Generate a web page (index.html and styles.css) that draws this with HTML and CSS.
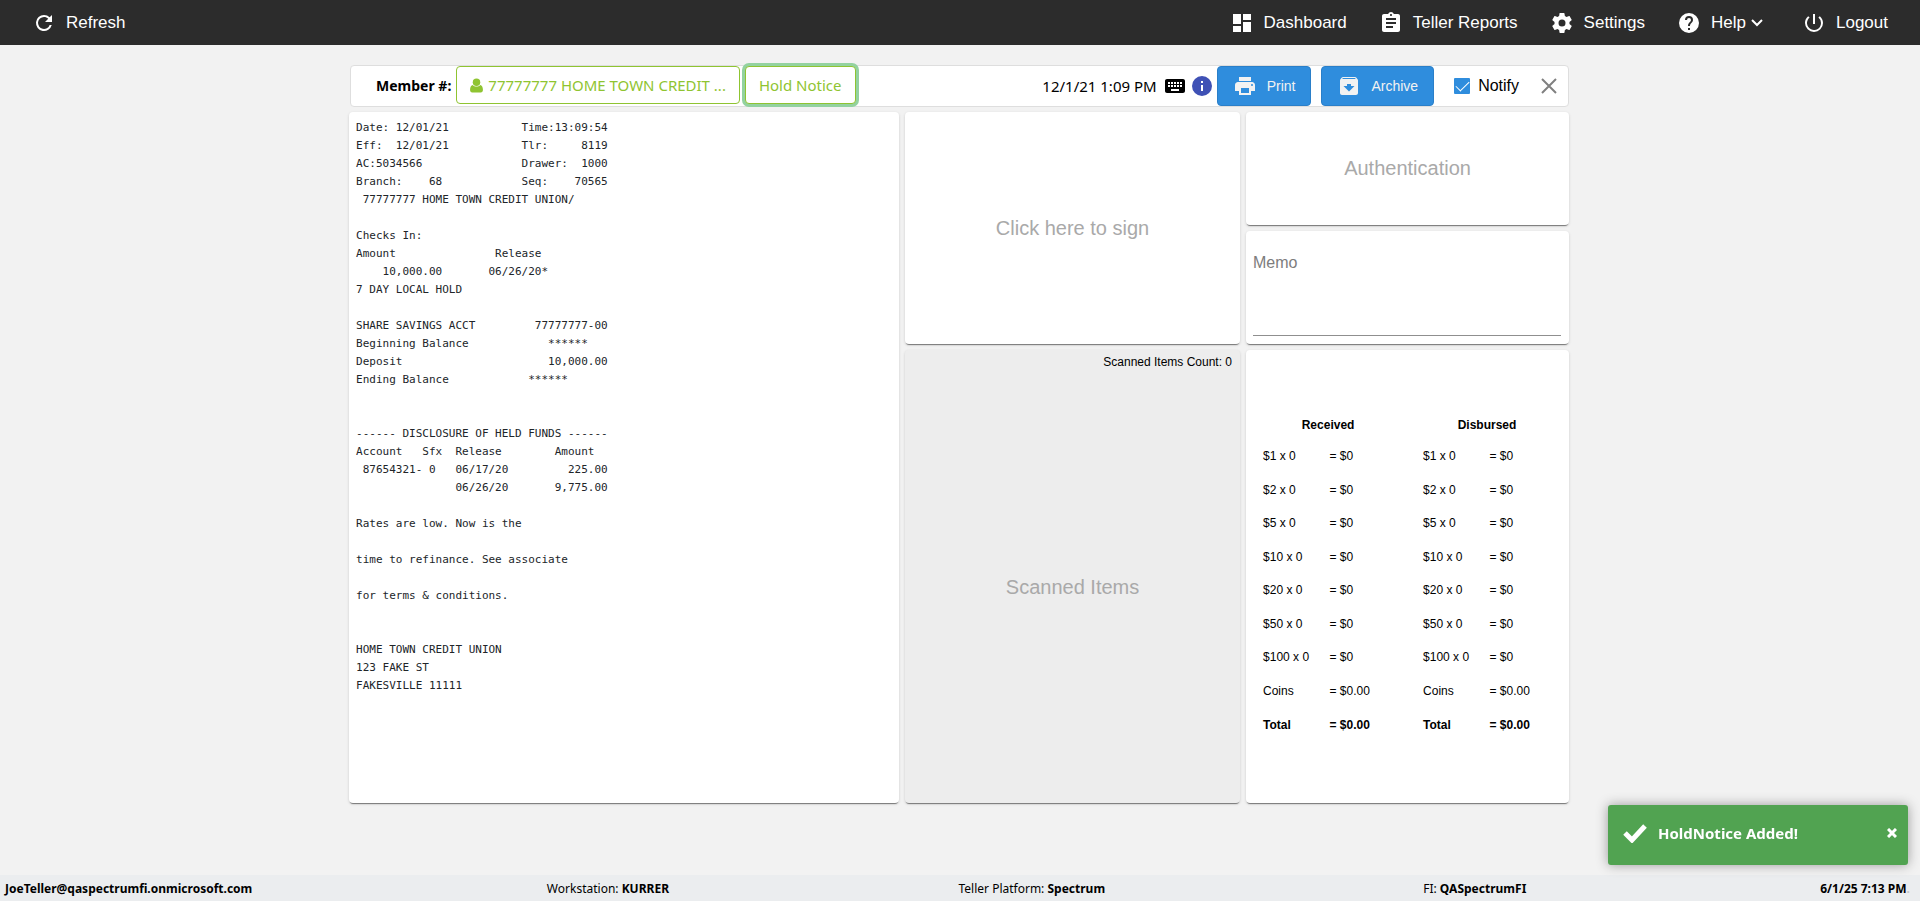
FILE: index.html
```html
<!DOCTYPE html>
<html lang="en">
<head>
<meta charset="utf-8">
<title>Hold Notice</title>
<link rel="stylesheet" href="styles.css">
</head>
<body>
<nav class="topbar">
  <a class="nav-link" href="#"><svg class="icon" viewBox="0 0 24 24"><path d="M17.65 6.35A7.96 7.96 0 0 0 12 4a8 8 0 1 0 7.73 10h-2.08A6 6 0 1 1 12 6c1.66 0 3.14.69 4.22 1.78L13 11h7V4z"/></svg>Refresh</a>
  <div class="nav-right">
    <a class="nav-link" href="#"><svg class="icon" viewBox="0 0 24 24"><path d="M3 13h8V3H3zm0 8h8v-6H3zm10 0h8V11h-8zm0-18v6h8V3z"/></svg>Dashboard</a>
    <a class="nav-link" href="#"><svg class="icon" viewBox="0 0 24 24"><path d="M19 3h-4.18C14.4 1.84 13.3 1 12 1s-2.4.84-2.82 2H5c-1.1 0-2 .9-2 2v14c0 1.1.9 2 2 2h14c1.1 0 2-.9 2-2V5c0-1.100-.9-2-2-2zm-7 0c.55 0 1 .45 1 1s-.45 1-1 1-1-.45-1-1 .45-1 1-1zm2 14H7v-2h7zm3-4H7v-2h10zm0-4H7V7h10z"/></svg>Teller Reports</a>
    <a class="nav-link" href="#"><svg class="icon" viewBox="0 0 24 24"><path d="M19.43 12.98c.04-.32.07-.64.07-.98s-.03-.66-.07-.98l2.110-1.650c.190-.150.240-.420.120-.640l-2-3.460c-.120-.220-.390-.300-.610-.220l-2.490 1c-.520-.400-1.080-.730-1.690-.980l-.380-2.650A.488.488 0 0 0 14 2h-4c-.250 0-.460.180-.490.420l-.380 2.650c-.610.250-1.170.590-1.690.980l-2.490-1c-.230-.090-.490 0-.610.220l-2 3.460c-.130.220-.070.490.120.640l2.110 1.650c-.040.320-.070.650-.070.980s.030.660.070.980l-2.110 1.650c-.190.150-.240.420-.120.640l2 3.460c.120.220.390.300.610.220l2.490-1c.520.400 1.080.730 1.690.980l.380 2.650c.030.240.240.420.490.420h4c.250 0 .460-.180.490-.420l.380-2.650c.610-.250 1.170-.590 1.690-.980l2.490 1c.230.090.490 0 .610-.220l2-3.460c.120-.220.070-.490-.120-.640zM12 15.500a3.500 3.500 0 1 1 0-7 3.500 3.500 0 0 1 0 7z"/></svg>Settings</a>
    <a class="nav-link help-link" href="#"><svg class="icon" viewBox="0 0 24 24"><path d="M12 2a10 10 0 1 0 0 20 10 10 0 0 0 0-20zm1 17h-2v-2h2zm2.070-7.750-.900.920C13.450 12.900 13 13.500 13 15h-2v-.500c0-1.100.450-2.100 1.170-2.830l1.240-1.260c.370-.360.590-.860.590-1.410a2 2 0 1 0-4 0H8a4 4 0 1 1 8 0c0 .880-.360 1.680-.930 2.250z"/></svg><span class="help-label">Help<svg class="chevron" viewBox="0 0 14 14"><path d="M2 4l5 5 5-5"/></svg></span></a>
    <a class="nav-link" href="#"><svg class="icon" viewBox="0 0 24 24"><path d="M13 3h-2v10h2zm4.830 2.170-1.420 1.420A6.920 6.920 0 0 1 19 12a7 7 0 1 1-11.420-5.420L6.170 5.170A8.930 8.930 0 0 0 3 12a9 9 0 0 0 18 0c0-2.740-1.230-5.180-3.170-6.830z"/></svg>Logout</a>
  </div>
</nav>

<main class="content">
  <header class="toolbar">
    <strong class="member-label">Member #:</strong>
    <button class="outline-btn member-btn" type="button"><svg class="user-icon" viewBox="0 0 12 14"><circle cx="6" cy="4" r="3.500"/><path d="M2.500 6.500C1 6.800 0 8.300 0 11c0 1.700.8 2.500 2 2.500h8c1.200 0 2-.8 2-2.500 0-2.700-1-4.200-2.500-4.500C8.600 7.600 7.400 8 6 8s-2.600-.4-3.500-1.500z"/></svg><span>77777777 HOME TOWN CREDIT ...</span></button>
    <button class="outline-btn focused" type="button">Hold Notice</button>
    <div class="toolbar-right">
      <span class="timestamp">12/1/21 1:09 PM</span>
      <svg class="icon" viewBox="0 0 24 24"><path d="M20 5H4c-1.100 0-1.990.9-1.990 2L2 17c0 1.100.9 2 2 2h16c1.100 0 2-.9 2-2V7c0-1.100-.9-2-2-2zm-9 3h2v2h-2zm0 3h2v2h-2zM8 8h2v2H8zm0 3h2v2H8zm-1 2H5v-2h2zm0-3H5V8h2zm9 7H8v-2h8zm0-4h-2v-2h2zm0-3h-2V8h2zm3 3h-2v-2h2zm0-3h-2V8h2z"/></svg>
      <svg class="icon info" viewBox="0 0 24 24"><path d="M12 2a10 10 0 1 0 0 20 10 10 0 0 0 0-20zm1 15h-2v-6h2zm0-8h-2V7h2z"/></svg>
      <button class="solid-btn" type="button"><svg class="icon" viewBox="0 0 24 24"><path d="M19 8H5c-1.660 0-3 1.340-3 3v6h4v4h12v-4h4v-6c0-1.660-1.340-3-3-3zm-3 11H8v-5h8zm3-7a1 1 0 1 1 0-2 1 1 0 0 1 0 2zm-1-9H6v4h12z"/></svg>Print</button>
      <button class="solid-btn archive-btn" type="button"><svg class="icon" viewBox="0 0 24 24"><path d="M20.540 5.230l-1.390-1.680A1.450 1.450 0 0 0 18 3H6c-.470 0-.880.210-1.160.550L3.460 5.230C3.170 5.570 3 6.020 3 6.500V19c0 1.100.9 2 2 2h14c1.100 0 2-.9 2-2V6.500c0-.480-.170-.930-.460-1.270zM12 17.500L6.500 12H10v-2h4v2h3.500zM5.120 5l.810-1h12l.940 1z"/></svg>Archive</button>
      <label class="notify"><input class="check" type="checkbox" checked>Notify</label>
      <button class="close-btn" type="button" aria-label="Close"><svg class="icon close-icon" viewBox="0 0 24 24"><path d="M5 5l14 14M19 5L5 19"/></svg></button>
    </div>
  </header>

  <div class="panels">
    <section class="card receipt"><pre class="receipt-text">Date: 12/01/21           Time:13:09:54
Eff:  12/01/21           Tlr:     8119
AC:5034566               Drawer:  1000
Branch:    68            Seq:    70565
 77777777 HOME TOWN CREDIT UNION/

Checks In:
Amount               Release
    10,000.00       06/26/20*
7 DAY LOCAL HOLD

SHARE SAVINGS ACCT         77777777-00
Beginning Balance            ******
Deposit                      10,000.00
Ending Balance            ******


------ DISCLOSURE OF HELD FUNDS ------
Account   Sfx  Release        Amount
 87654321- 0   06/17/20         225.00
               06/26/20       9,775.00

Rates are low. Now is the

time to refinance. See associate

for terms &amp; conditions.


HOME TOWN CREDIT UNION
123 FAKE ST
FAKESVILLE 11111</pre></section>
    <button class="card sign" type="button">Click here to sign</button>
    <button class="card auth" type="button">Authentication</button>
    <section class="card memo"><textarea class="memo-input" placeholder="Memo" aria-label="Memo"></textarea></section>
    <section class="card scanned">
      <div class="scanned-count">Scanned Items Count: 0</div>
      <div class="scanned-title">Scanned Items</div>
    </section>
    <section class="card cash">
      <table class="cash-table">
        <colgroup><col class="col-unit"><col class="col-received"><col class="col-unit"><col></colgroup>
        <thead><tr><th colspan="2">Received</th><th colspan="2">Disbursed</th></tr></thead>
        <tbody>
          <tr><td>$1 x 0</td><td>= $0</td><td>$1 x 0</td><td>= $0</td></tr>
          <tr><td>$2 x 0</td><td>= $0</td><td>$2 x 0</td><td>= $0</td></tr>
          <tr><td>$5 x 0</td><td>= $0</td><td>$5 x 0</td><td>= $0</td></tr>
          <tr><td>$10 x 0</td><td>= $0</td><td>$10 x 0</td><td>= $0</td></tr>
          <tr><td>$20 x 0</td><td>= $0</td><td>$20 x 0</td><td>= $0</td></tr>
          <tr><td>$50 x 0</td><td>= $0</td><td>$50 x 0</td><td>= $0</td></tr>
          <tr><td>$100 x 0</td><td>= $0</td><td>$100 x 0</td><td>= $0</td></tr>
          <tr><td>Coins</td><td>= $0.00</td><td>Coins</td><td>= $0.00</td></tr>
          <tr class="total"><td>Total</td><td>= $0.00</td><td>Total</td><td>= $0.00</td></tr>
        </tbody>
      </table>
    </section>
  </div>
</main>

<footer class="statusbar">
  <strong>JoeTeller@qaspectrumfi.onmicrosoft.com</strong>
  <span>Workstation: <strong>KURRER</strong></span>
  <span>Teller Platform: <strong>Spectrum</strong></span>
  <span>FI: <strong>QASpectrumFI</strong></span>
  <strong class="clock">6/1/25 7:13 PM<span class="dot">.</span></strong>
</footer>

<div class="toast" role="status">
  <svg class="toast-check" viewBox="0 0 24 20"><path d="M2 10l7 7L22 3"/></svg>
  <span class="toast-text">HoldNotice Added!</span>
  <button class="toast-close" type="button" aria-label="Dismiss"><svg class="toast-x" viewBox="0 0 10 10"><path d="M1 1l8 8M9 1L1 9"/></svg></button>
</div>
</body>
</html>
```

FILE: styles.css
```css
* { box-sizing: border-box; }

body {
  margin: 0;
  min-height: 100vh;
  display: flex;
  flex-direction: column;
  background: #f2f2f2;
  color: #000;
  font-family: "Liberation Sans", Arial, sans-serif;
  font-size: 16px;
}

button {
  font-family: inherit;
  cursor: pointer;
}

.icon {
  width: 24px;
  height: 24px;
  flex: none;
  fill: currentColor;
}

/* Top navigation */
.topbar {
  height: 45px;
  display: flex;
  justify-content: space-between;
  align-items: center;
  padding: 0 32px;
  background: #2c2c2c;
}

.nav-right {
  display: flex;
  gap: 32px;
}

.nav-link {
  display: flex;
  align-items: center;
  gap: 10px;
  color: #fff;
  font-size: 17px;
  text-decoration: none;
}

.help-link { padding-right: 6px; }

.help-label {
  display: flex;
  align-items: center;
  gap: 4px;
}

.chevron {
  width: 14px;
  height: 14px;
  fill: none;
  stroke: currentColor;
  stroke-width: 2;
}

/* Main area */
.content {
  flex: 1;
  display: flex;
  flex-direction: column;
  gap: 5px;
  padding: 20px 18.28% 72px 18.18%;
}

.toolbar {
  display: flex;
  align-items: center;
  gap: 5px;
  height: 42px;
  margin-left: 1px;
  padding-left: 25px;
  background: #fff;
  border: 1px solid #dedede;
  border-radius: 4px;
}

.member-label {
  padding-bottom: 2px;
  font-family: "Noto Sans", sans-serif;
  font-size: 14px;
}

.outline-btn {
  height: 38px;
  align-self: flex-start;
  padding: 0 13px;
  background: #fff;
  border: 1px solid #8fc431;
  border-radius: 4px;
  color: #8fc431;
  font-family: "Noto Sans", sans-serif;
  font-size: 15px;
  white-space: nowrap;
}

.member-btn {
  display: flex;
  align-items: center;
  gap: 5px;
}

.user-icon {
  width: 13px;
  height: 15px;
  fill: currentColor;
}

.focused { box-shadow: 0 0 0 3px #93d2a0; }

.toolbar-right {
  display: flex;
  align-items: center;
  margin-left: auto;
  padding-right: 7px;
}

.timestamp {
  margin-right: 6px;
  font-family: "Noto Sans", sans-serif;
  font-size: 15px;
}

.info {
  margin: 0 3px;
  color: #3f51b5;
}

.solid-btn {
  display: flex;
  align-items: center;
  gap: 10px;
  height: 40px;
  padding: 0 15px;
  background: #2f8ddd;
  border: 1px solid #2a7fc9;
  border-radius: 4px;
  color: #f2f2f2;
  font-size: 14px;
}

.archive-btn { margin: 0 20px 0 10px; }

.notify {
  display: flex;
  align-items: center;
  gap: 8px;
}

.check {
  width: 16px;
  height: 16px;
  margin: 0;
  appearance: none;
  background: #2f8ddd;
  border-radius: 1px;
  display: grid;
  place-items: center;
}

.check::before {
  content: "";
  width: 12px;
  height: 6px;
  margin-bottom: 3px;
  border: solid #fff;
  border-width: 0 0 1px 1px;
  transform: rotate(-45deg);
}

.close-btn {
  display: flex;
  margin-left: 18px;
  padding: 0;
  background: none;
  border: 0;
  color: #808080;
}

.close-icon {
  fill: none;
  stroke: currentColor;
  stroke-width: 2;
}

/* Panels */
.panels {
  flex: 1;
  display: grid;
  grid-template-columns: 550fr 335fr 323fr;
  grid-template-rows: 1fr 1fr 4fr;
  gap: 6px;
}

.card {
  background: #fff;
  border: 0;
  border-radius: 4px;
  box-shadow: 0 2px 1px -1px rgba(0, 0, 0, 0.45), 0 1px 3px rgba(0, 0, 0, 0.16);
}

.receipt {
  grid-row: 1 / 4;
  padding: 7px;
}

.receipt-text {
  margin: 0;
  color: #212529;
  font-family: "DejaVu Sans Mono", monospace;
  font-size: 11px;
  line-height: 18px;
}

.sign,
.auth,
.scanned-title {
  color: #a9a9a9;
  font-size: 20px;
}

.sign { grid-row: 1 / 3; }

.memo {
  display: flex;
  padding: 8px 8px 8px 7px;
}

.memo-input {
  flex: 1;
  width: 100%;
  padding: 15px 0 0;
  background: none;
  border: 0;
  border-bottom: 1px solid #8f8f8f;
  resize: none;
  font: inherit;
}

.memo-input::placeholder { color: #7d7d7d; }

.scanned {
  grid-column: 2;
  grid-row: 3;
  display: flex;
  flex-direction: column;
  padding: 3px 8px 0;
  background: #ededed;
  font-size: 12px;
}

.scanned-count {
  line-height: 18px;
  text-align: right;
}

.scanned-title {
  flex: 1;
  display: grid;
  place-items: center;
}

.cash {
  grid-column: 3;
  padding: 61px 4px 0 17px;
}

.cash-table {
  width: 100%;
  height: 330px;
  table-layout: fixed;
  border-collapse: collapse;
  font-size: 12px;
}

.col-unit { width: 22%; }

.col-received { width: 31%; }

.cash-table th {
  height: 28px;
  padding: 0 30px 0 0;
}

.cash-table th:last-child { padding-right: 14px; }

.cash-table td {
  height: 33px;
  padding: 0;
}

.total { font-weight: bold; }

/* Status bar */
.statusbar {
  display: grid;
  grid-template-columns: 541fr 411fr 464fr 300fr 186fr;
  align-items: center;
  height: 26px;
  padding: 0 10px 0 5px;
  background: #ebedef;
  font-family: "Noto Sans", sans-serif;
  font-size: 12px;
}

.clock { text-align: right; }

.dot { color: #c4c6c8; }

/* Toast */
.toast {
  position: fixed;
  right: 12px;
  bottom: 36px;
  width: 300px;
  height: 60px;
  display: flex;
  align-items: center;
  padding: 0 11px 5px 15px;
  background: #51a351;
  border-radius: 3px;
  box-shadow: 0 0 12px #999;
  color: #fff;
}

.toast-check {
  width: 24px;
  height: 20px;
  margin-right: 11px;
  fill: none;
  stroke: currentColor;
  stroke-width: 5;
}

.toast-text {
  font-family: "Noto Sans", sans-serif;
  font-size: 15px;
  font-weight: bold;
}

.toast-close {
  display: flex;
  margin-left: auto;
  padding: 0;
  background: none;
  border: 0;
  color: inherit;
}

.toast-x {
  width: 10px;
  height: 10px;
  stroke: currentColor;
  stroke-width: 3;
}
```
